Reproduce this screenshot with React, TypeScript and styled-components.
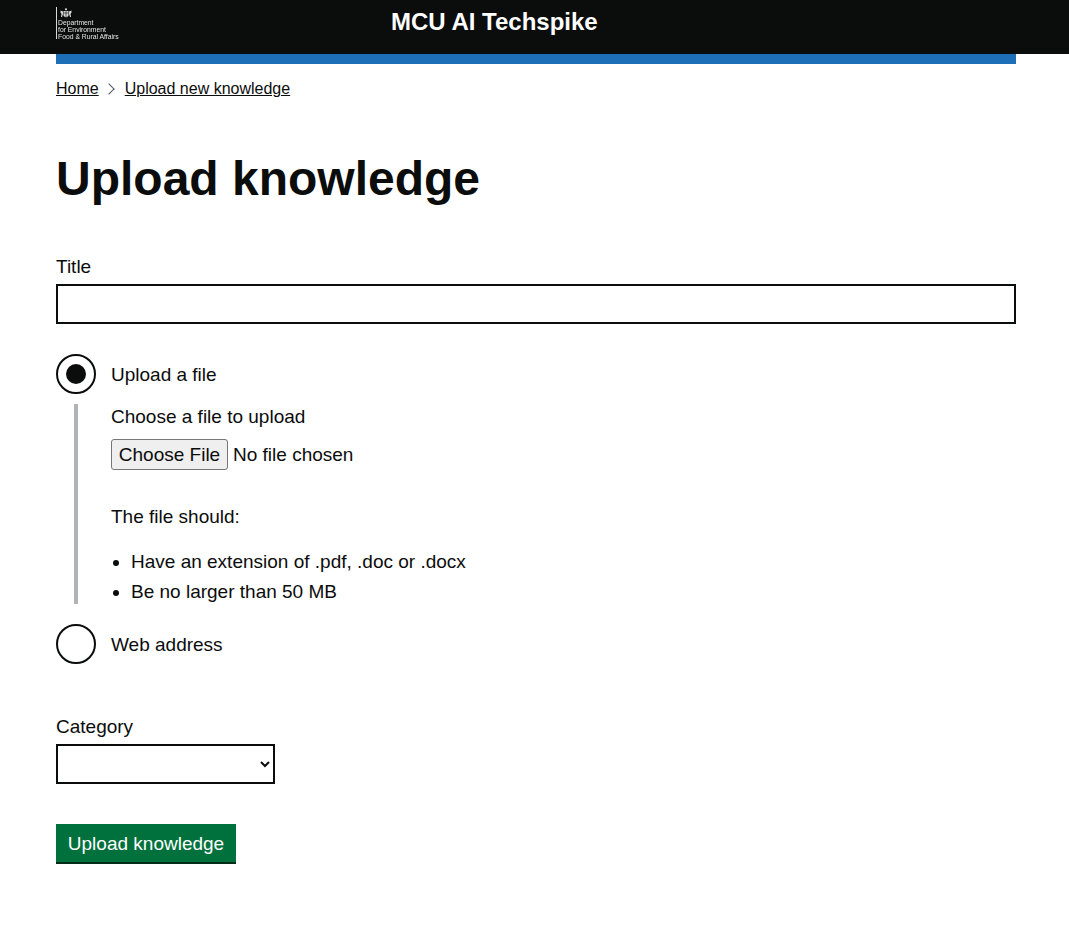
import React from "react";
import styled, { createGlobalStyle } from "styled-components";

const Global = createGlobalStyle`
  html, body { margin: 0; padding: 0; background: #fff; }
  body { font-family: "Liberation Sans", Arial, sans-serif; color: #0b0c0c; }
`;

const Header = styled.header`
  background: #0b0c0c;
  height: 54px;
  padding-left: 56px;
  display: flex;
  width: 100%;
  box-sizing: border-box;
`;
const Logo = styled.div`
  margin-top: 7px;
  height: 32px;
  border-left: 1px solid #d8d8d8;
  padding-left: 1px;
  color: #e4e4e4;
  width: 64px;
  box-sizing: border-box;
  will-change: transform;
`;
const Crest = styled.svg`
  display: block;
  width: 12px;
  height: 10px;
  margin: 1px 0 0.8px 2px;
`;
const LogoLine = styled.div`
  font-size: 6.8px;
  line-height: 7.2px;
  white-space: nowrap;
`;
const ServiceName = styled.div`
  color: #fff;
  font-size: 24px;
  font-weight: 700;
  line-height: 30px;
  margin: 7px 0 0 271px;
  white-space: nowrap;
`;
const Container = styled.div`
  width: 960px;
  margin-left: 56px;
`;
const BlueBar = styled.div`
  height: 10px;
  background: #1d70b8;
`;
const Breadcrumbs = styled.nav`
  display: flex;
  align-items: center;
  height: 20px;
  margin-top: 15px;
  font-size: 16px;
  line-height: 20px;
`;
const Crumb = styled.a`
  color: #0b0c0c;
  text-decoration: underline;
  text-underline-offset: 1px;
`;
const Chevron = styled.span`
  width: 7px;
  height: 7px;
  margin: 0 12px 0 6px;
  border-top: 1px solid #505a5f;
  border-right: 1px solid #505a5f;
  transform: rotate(45deg);
`;
const Title = styled.h1`
  margin: 55px 0 0;
  font-size: 48px;
  line-height: 50px;
  font-weight: 700;
`;
const Label = styled.label`
  display: block;
  font-size: 19px;
  line-height: 25px;
  margin-bottom: 5px;
`;
const TitleGroup = styled.div`
  margin-top: 50px;
`;
const TextInput = styled.input`
  display: block;
  width: 100%;
  height: 40px;
  box-sizing: border-box;
  border: 2px solid #0b0c0c;
  border-radius: 0;
  padding: 5px;
  font: inherit;
  font-size: 19px;
`;
const RadioRow = styled.div<{ $top: number }>`
  display: flex;
  align-items: center;
  margin-top: ${(p) => p.$top}px;
  height: 40px;
`;
const RadioCircle = styled.span<{ $checked?: boolean }>`
  width: 40px;
  height: 40px;
  box-sizing: border-box;
  border: 2px solid #0b0c0c;
  border-radius: 50%;
  display: flex;
  align-items: center;
  justify-content: center;
  background: #fff;
  &::after {
    content: "";
    display: ${(p) => (p.$checked ? "block" : "none")};
    width: 20px;
    height: 20px;
    border-radius: 50%;
    background: #0b0c0c;
  }
`;
const RadioLabel = styled.span`
  margin-left: 15px;
  font-size: 19px;
  line-height: 25px;
`;
const Conditional = styled.div`
  margin: 10px 0 0 18px;
  border-left: 4px solid #b1b4b6;
  padding-left: 33px;
  height: 200px;
  box-sizing: border-box;
`;
const FileLabel = styled.div`
  font-size: 19px;
  line-height: 25px;
`;
const FileRow = styled.div`
  display: flex;
  align-items: center;
  margin-top: 10px;
  font-size: 19px;
  line-height: 31px;
  height: 31px;
`;
const FileButton = styled.button`
  height: 31px;
  box-sizing: border-box;
  width: 117px;
  padding: 0;
  border: 1px solid #767676;
  border-radius: 3px;
  background: #efefef;
  color: #0b0c0c;
  font-family: inherit;
  font-size: 19px;
  line-height: 22px;
  margin-right: 5px;
`;
const Body = styled.p`
  font-size: 19px;
  line-height: 25px;
  margin: 34px 0 0;
`;
const Bullets = styled.ul`
  margin: 20px 0 0;
  padding-left: 20px;
  font-size: 19px;
  line-height: 25px;
`;
const Bullet = styled.li`
  margin-bottom: 5px;
`;
const CategoryGroup = styled.div`
  margin-top: 50px;
`;
const Select = styled.select`
  display: block;
  width: 219px;
  height: 40px;
  box-sizing: border-box;
  border: 2px solid #0b0c0c;
  border-radius: 0;
  background: #fff;
  padding: 5px;
  font-family: inherit;
  font-size: 19px;
  color: #0b0c0c;
`;
const Submit = styled.button`
  display: block;
  margin-top: 40px;
  height: 40px;
  width: 180px;
  box-sizing: border-box;
  border: 0;
  border-bottom: 2px solid #002d18;
  padding: 0;
  background: #00703c;
  color: #fff;
  font: inherit;
  font-size: 19px;
  line-height: 25px;
`;

export default function App() {
  return (
    <>
      <Global />
      <Header>
        <Logo>
          <Crest viewBox="0 0 24 20" aria-hidden="true">
            <g fill="#d8d8d8">
              <circle cx="12" cy="2.5" r="2.2" />
              <path d="M7 6h10v8c0 2.500-2.500 4.500-5 4.500S7 16.500 7 14z" />
              <path d="M1 5l5 2v5l-2 6H2l1-6-2-3zM23 5l-5 2v5l2 6h2l-1-6 2-3z" />
            </g>
            <path d="M7 10h10M12 6v12" stroke="#0b0c0c" strokeWidth="1.2" />
          </Crest>
          <LogoLine>Department</LogoLine>
          <LogoLine>for Environment</LogoLine>
          <LogoLine>Food &amp; Rural Affairs</LogoLine>
        </Logo>
        <ServiceName>MCU AI Techspike</ServiceName>
      </Header>
      <Container>
        <BlueBar />
        <Breadcrumbs>
          <Crumb href="#">Home</Crumb>
          <Chevron />
          <Crumb href="#">Upload new knowledge</Crumb>
        </Breadcrumbs>
        <Title>Upload knowledge</Title>
        <TitleGroup>
          <Label>Title</Label>
          <TextInput type="text" />
        </TitleGroup>
        <RadioRow $top={30}>
          <RadioCircle $checked />
          <RadioLabel>Upload a file</RadioLabel>
        </RadioRow>
        <Conditional>
          <FileLabel>Choose a file to upload</FileLabel>
          <FileRow>
            <FileButton type="button">Choose File</FileButton>
            No file chosen
          </FileRow>
          <Body>The file should:</Body>
          <Bullets>
            <Bullet>Have an extension of .pdf, .doc or .docx</Bullet>
            <Bullet>Be no larger than 50 MB</Bullet>
          </Bullets>
        </Conditional>
        <RadioRow $top={20}>
          <RadioCircle />
          <RadioLabel>Web address</RadioLabel>
        </RadioRow>
        <CategoryGroup>
          <Label>Category</Label>
          <Select />
        </CategoryGroup>
        <Submit type="button">Upload knowledge</Submit>
      </Container>
    </>
  );
}
